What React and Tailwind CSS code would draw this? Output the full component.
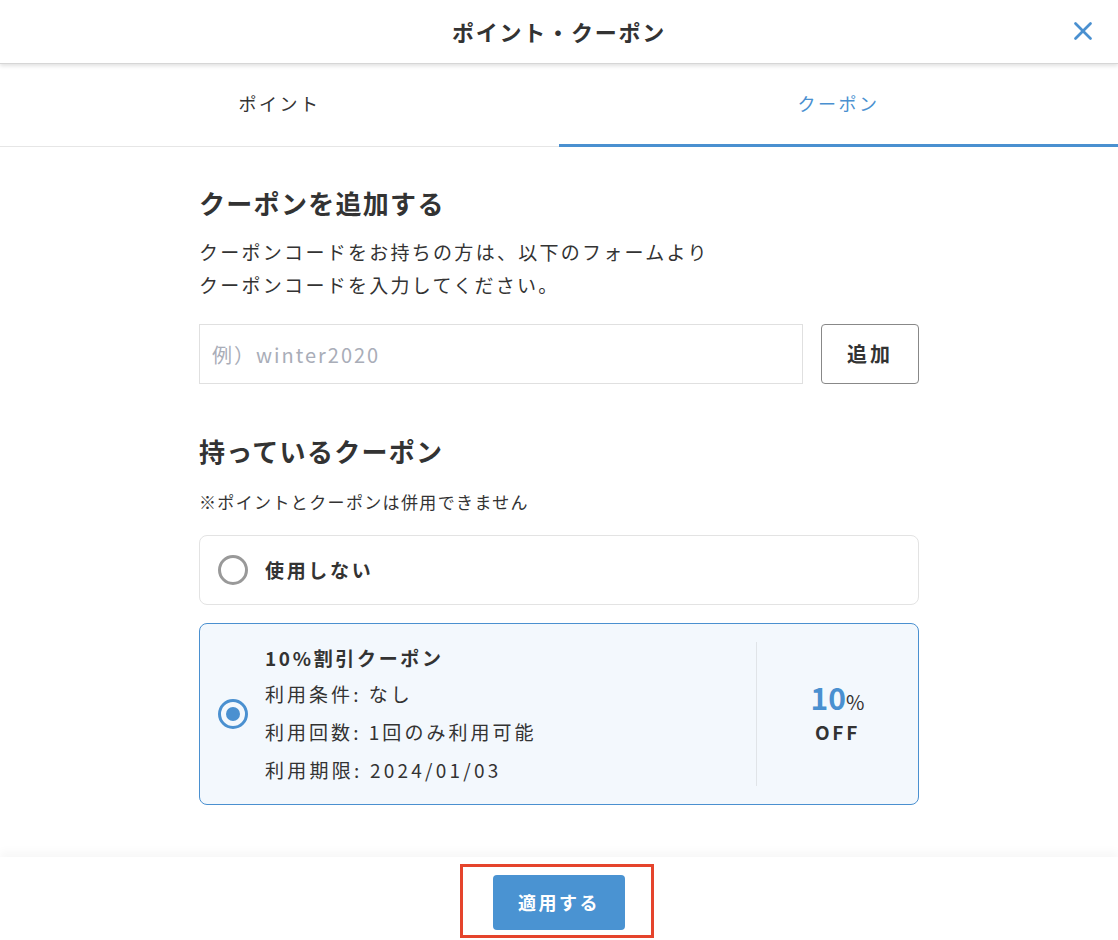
import { X } from 'lucide-react';

const font = { fontFamily: '"Noto Sans CJK JP", "Noto Sans", sans-serif' };

export default function App() {
  return (
    <div style={font} className="relative h-[940px] w-[1118px] overflow-hidden bg-white text-[#333]">
      {/* Header */}
      <div className="relative z-10 flex h-[64px] items-center justify-center border-b border-[#d6d6d6] bg-white shadow-[0_2px_4px_rgba(0,0,0,0.12)]">
        <h1 className="text-[22px] font-bold tracking-[0.08em]">ポイント・クーポン</h1>
        <button className="absolute right-[20px] top-[16px] text-[#4a90d0]">
          <X size={30} strokeWidth={2.2} />
        </button>
      </div>

      {/* Tabs */}
      <div className="flex h-[83px]">
        <div className="flex flex-1 items-center justify-center border-b border-[#e6e6e6] pb-[4px] text-[18px] tracking-[0.14em] text-[#333]">
          ポイント
        </div>
        <div className="flex flex-1 items-center justify-center border-b-[3px] border-[#4a90d0] pb-[2px] text-[18px] tracking-[0.14em] text-[#4a90d0]">
          クーポン
        </div>
      </div>

      {/* Content */}
      <div className="mx-auto w-[720px] pt-[37px]">
        <h2 className="text-[26px] font-bold leading-[38px] tracking-[0.05em]">クーポンを追加する</h2>
        <p className="mt-[13px] text-[19px] leading-[33px] tracking-[0.12em] text-[#333]">
          クーポンコードをお持ちの方は、以下のフォームより
          <br />
          クーポンコードを入力してください。
        </p>

        <div className="mt-[23px] flex gap-[18px]">
          <input
            type="text"
            placeholder="例）winter2020"
            className="h-[60px] w-[604px] border border-[#e0e0e0] px-[12px] text-[20px] tracking-[0.1em] outline-none placeholder:text-[#a9adb8]"
          />
          <button className="h-[60px] flex-1 rounded-[4px] border border-[#888] text-[20px] font-bold tracking-[0.15em]">
            追加
          </button>
        </div>

        <h2 className="mt-[48px] text-[26px] font-bold leading-[38px] tracking-[0.05em]">持っているクーポン</h2>
        <p className="mt-[20px] text-[17px] leading-[24px] tracking-[0.08em]">※ポイントとクーポンは併用できません</p>

        <div className="mt-[21px] flex h-[70px] items-center rounded-[8px] border border-[#e3e3e3] px-[18px]">
          <span className="h-[30px] w-[30px] rounded-full border-[3px] border-[#999]" />
          <span className="ml-[17px] text-[19px] font-bold tracking-[0.14em]">使用しない</span>
        </div>

        <div className="mt-[18px] flex h-[182px] items-center rounded-[8px] border border-[#4a90d0] bg-[#f3f8fd] pl-[18px]">
          <span className="flex h-[30px] w-[30px] items-center justify-center rounded-full border-[3px] border-[#4a90d0]">
            <span className="h-[14px] w-[14px] rounded-full bg-[#4a90d0]" />
          </span>
          <div className="ml-[17px] flex-1 pt-[2px] text-[19px] leading-[38px] tracking-[0.16em]">
            <div className="font-bold leading-[34px] tracking-[0.14em]">10%割引クーポン</div>
            <div>利用条件: なし</div>
            <div>利用回数: 1回のみ利用可能</div>
            <div className="tracking-[0.17em]">利用期限: 2024/01/03</div>
          </div>
          <div className="flex h-[144px] w-[162px] flex-col items-center justify-center border-l border-[#e0e4e8]">
            <div className="leading-[30px]">
              <span className="text-[30px] font-bold text-[#4a90d0]">10</span>
              <span className="text-[20px]">%</span>
            </div>
            <div className="text-[19px] font-bold leading-[28px] tracking-[0.14em]">OFF</div>
          </div>
        </div>
      </div>

      {/* Footer */}
      <div className="absolute bottom-0 left-0 right-0 h-[83px] bg-white shadow-[0_-6px_8px_rgba(0,0,0,0.03)]">
        <div className="absolute left-[460px] top-[7px] h-[74px] w-[194px] border-[3px] border-[#e5442c]" />
        <div className="flex h-full items-start justify-center pt-[18px]">
          <button className="h-[55px] w-[132px] rounded-[4px] bg-[#4a93d2] text-[18px] font-bold tracking-[0.14em] text-white">
            適用する
          </button>
        </div>
      </div>
    </div>
  );
}
